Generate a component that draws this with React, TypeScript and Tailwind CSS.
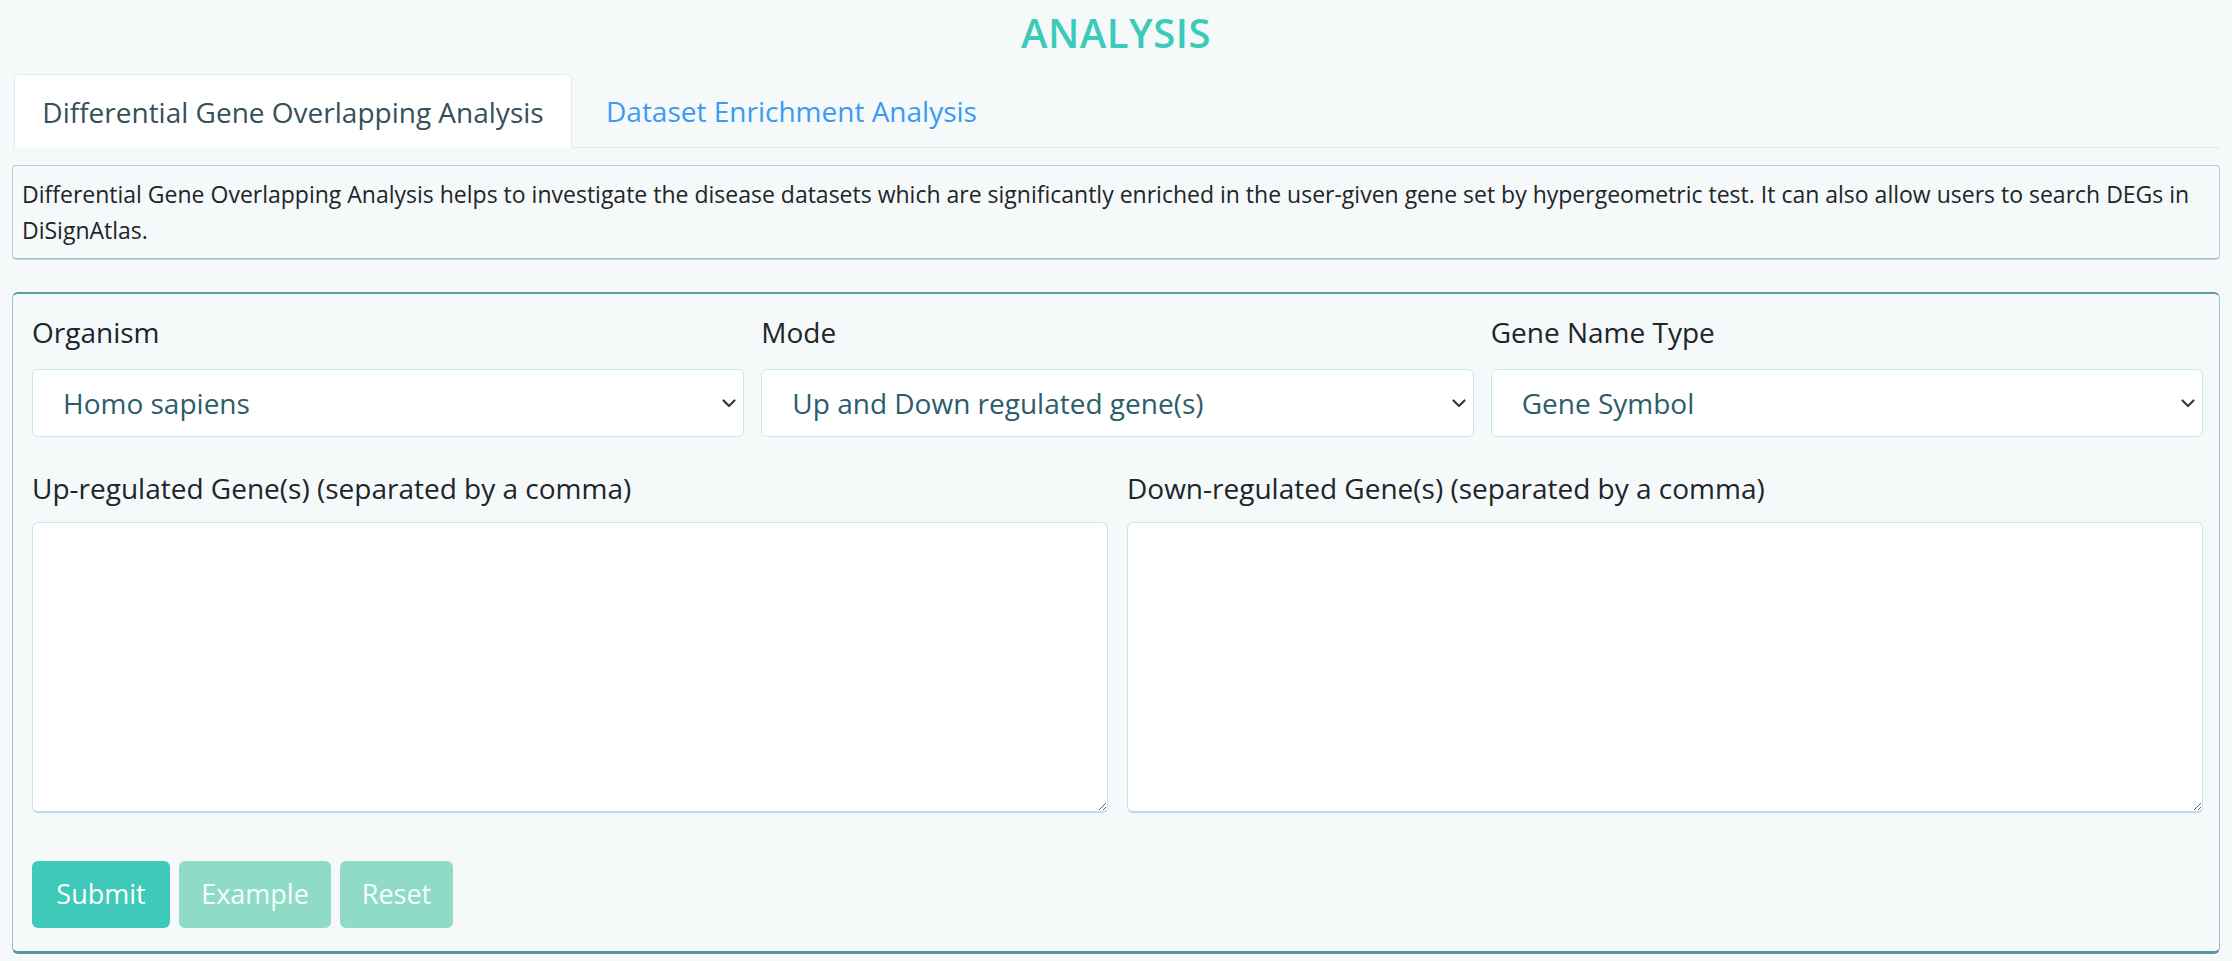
import { useState } from 'react';

const selects = [
  { label: 'Organism', value: 'Homo sapiens', options: ['Homo sapiens', 'Mus musculus'] },
  {
    label: 'Mode',
    value: 'Up and Down regulated gene(s)',
    options: ['Up and Down regulated gene(s)', 'Up regulated gene(s)', 'Down regulated gene(s)'],
  },
  { label: 'Gene Name Type', value: 'Gene Symbol', options: ['Gene Symbol', 'Entrez ID', 'Ensembl ID'] },
];

function Chevron() {
  return (
    <svg className="pointer-events-none absolute right-[7px] top-1/2 -translate-y-1/2 w-[16px] h-[16px]" viewBox="0 0 16 16" fill="none">
      <path d="M2.5 5.5l5.5 5.5 5.5-5.5" stroke="#343a40" strokeWidth={2.2} strokeLinecap="round" strokeLinejoin="round" />
    </svg>
  );
}

export default function App() {
  const [tab, setTab] = useState(0);
  const [up, setUp] = useState('');
  const [down, setDown] = useState('');

  return (
    <div className="min-h-screen bg-[#f5f9fa] font-['Open_Sans',sans-serif] text-[#212529]">
      <div className="px-[12px]">
        <h1 className="h-[74px] flex items-center justify-center text-[40px] font-semibold tracking-[0.5px] text-[#3ccbb8] leading-none pb-[8px]">
          ANALYSIS
        </h1>

        {/* tabs */}
        <div className="flex border-b border-[#dbeaee] h-[74px] px-[2px]">
          <button
            onClick={() => setTab(0)}
            className={
              tab === 0
                ? 'w-[558px] bg-white border border-b-0 border-[#d5eef3] rounded-t-[6px] text-[28px] text-[#36505b] -mb-px'
                : 'w-[558px] text-[28px] text-[#3a9af5]'
            }
          >
            Differential Gene Overlapping Analysis
          </button>
          <button
            onClick={() => setTab(1)}
            className={
              tab === 1
                ? 'px-[34px] bg-white border border-b-0 border-[#d5eef3] rounded-t-[6px] text-[28px] text-[#36505b] -mb-px'
                : 'px-[34px] text-[28px] text-[#3a9af5]'
            }
          >
            Dataset Enrichment Analysis
          </button>
        </div>

        {/* description */}
        <div className="mt-[17px] border border-[#b4d2d6] border-b-[#9fbfc4] rounded-[4px] px-[9px] py-[10px] text-[23px] leading-[36px] shadow-[0_1px_0_#c9dadd]">
          Differential Gene Overlapping Analysis helps to investigate the disease datasets which are significantly enriched in the user-given gene set by hypergeometric test. It can also allow users to search DEGs in DiSignAtlas.
        </div>

        {/* form panel */}
        <div className="mt-[33px] border border-x-[#9bc3c8] border-t-2 border-t-[#5e9ea6] border-b-[3px] border-b-[#5797a0] rounded-[6px] pl-[19px] pr-[16px] pt-[18px] pb-[23px]">
          <div className="grid grid-cols-3 gap-x-[17px]">
            {selects.map((s) => (
              <div key={s.label}>
                <div className="h-[40px] flex items-center text-[28px] leading-none mb-[17px]">{s.label}</div>
                <div className="relative">
                  <select
                    defaultValue={s.value}
                    className="appearance-none w-full h-[68px] bg-white border border-[#c2e9ef] rounded-[6px] pl-[30px] pr-[40px] text-[28px] text-[#2c5d6b] outline-none"
                  >
                    {s.options.map((o) => (
                      <option key={o}>{o}</option>
                    ))}
                  </select>
                  <Chevron />
                </div>
              </div>
            ))}
          </div>

          <div className="grid grid-cols-2 gap-x-[19px] mt-[34px]">
            <div>
              <div className="h-[34px] flex items-center text-[28px] leading-none mb-[17px]">
                Up-regulated Gene(s) (separated by a comma)
              </div>
              <textarea
                value={up}
                onChange={(e) => setUp(e.target.value)}
                className="block w-full h-[291px] bg-white border border-[#c2e9ef] border-b-2 border-b-[#bcdde6] rounded-[6px] p-3 text-[28px] outline-none"
              />
            </div>
            <div>
              <div className="h-[34px] flex items-center text-[28px] leading-none mb-[17px]">
                Down-regulated Gene(s) (separated by a comma)
              </div>
              <textarea
                value={down}
                onChange={(e) => setDown(e.target.value)}
                className="block w-full h-[291px] bg-white border border-[#c2e9ef] border-b-2 border-b-[#bcdde6] rounded-[6px] p-3 text-[28px] outline-none"
              />
            </div>
          </div>

          <div className="flex gap-[9px] mt-[48px]">
            <button className="w-[138px] h-[67px] rounded-[6px] bg-[#3fc9b8] text-white text-[27px]">Submit</button>
            <button className="w-[152px] h-[67px] rounded-[6px] bg-[#8fdbc6] text-[#f3fffa] text-[27px]" disabled>
              Example
            </button>
            <button
              onClick={() => {
                setUp('');
                setDown('');
              }}
              className="w-[113px] h-[67px] rounded-[6px] bg-[#8fdbc6] text-[#f3fffa] text-[27px]"
            >
              Reset
            </button>
          </div>
        </div>
      </div>
    </div>
  );
}
